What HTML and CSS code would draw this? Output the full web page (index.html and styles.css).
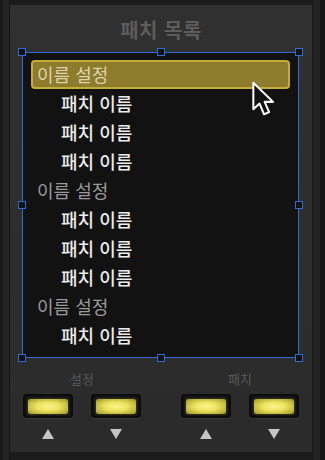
FILE: index.html
```html
<!DOCTYPE html>
<html lang="ko">
<head>
  <meta charset="UTF-8" />
  <title>패치 목록</title>
  <link rel="stylesheet" href="styles.css">
</head>
<body>
  <div class="frame">
    <div class="panel">
      <h1 class="title">패치 목록</h1>

      <div class="listbox">
        <!-- selection handles -->
        <span class="handle h-tl"></span>
        <span class="handle h-tm"></span>
        <span class="handle h-tr"></span>
        <span class="handle h-ml"></span>
        <span class="handle h-mr"></span>
        <span class="handle h-bl"></span>
        <span class="handle h-bm"></span>
        <span class="handle h-br"></span>

        <ul class="patch-list">
          <li class="group selected">이름 설정</li>
          <li class="item">패치 이름</li>
          <li class="item">패치 이름</li>
          <li class="item">패치 이름</li>
          <li class="group">이름 설정</li>
          <li class="item">패치 이름</li>
          <li class="item">패치 이름</li>
          <li class="item">패치 이름</li>
          <li class="group">이름 설정</li>
          <li class="item">패치 이름</li>
        </ul>

        <svg class="cursor" width="25" height="35" viewBox="0 0 21 31">
          <path d="M1.5 1.5 L1.5 25 L7 20 L11 29.5 L15.5 27.5 L11.5 18.5 L19 18.5 Z"
                fill="#111" stroke="#fff" stroke-width="1.8" stroke-linejoin="round"/>
        </svg>
      </div>

      <div class="controls">
        <div class="ctl-group">
          <div class="ctl-label">설정</div>
          <button class="led-btn"><span></span></button>
          <button class="led-btn"><span></span></button>
          <i class="arrow up"></i>
          <i class="arrow down"></i>
        </div>
        <div class="ctl-group">
          <div class="ctl-label">패치</div>
          <button class="led-btn"><span></span></button>
          <button class="led-btn"><span></span></button>
          <i class="arrow up"></i>
          <i class="arrow down"></i>
        </div>
      </div>
    </div>
  </div>
</body>
</html>
```

FILE: styles.css
```css
*, *::before, *::after { box-sizing: border-box; }
body {
  margin: 0;
  background: #1b1b1b;
  font-family: "Noto Sans CJK KR", "Noto Sans", sans-serif;
}
.frame {
  width: 325px;
  height: 460px;
  padding: 5px 13px 8px 10px;
  background:
    linear-gradient(90deg, #1a1a1a 0 3px, #242424 3px 9px, #151515 9px 10px, transparent 10px),
    linear-gradient(270deg, #161616 0 5px, #232323 5px 12px, #171717 12px 13px, transparent 13px),
    #1b1b1b;
}
.panel {
  height: 100%;
  background: linear-gradient(#303030, #2b2b2b);
  display: flex;
  flex-direction: column;
}
.title {
  margin: 0;
  height: 47px;
  line-height: 50px;
  text-align: center;
  font-size: 20px;
  font-weight: bold;
  color: #5c5c5c;
  letter-spacing: 0.5px;
}

/* list */
.listbox {
  position: relative;
  margin: 0 13px 0 12px;
  height: 306px;
  background: #121212;
  border: 1px solid #2f6bd0;
}
.patch-list {
  list-style: none;
  margin: 0;
  padding: 7px 8px 0 8px;
}
.patch-list li {
  height: 29px;
  line-height: 28px;
  font-size: 18px;
  white-space: nowrap;
}
.group {
  color: #9a9a9a;
  padding-left: 6px;
}
.item {
  color: #ececec;
  font-weight: 500;
  padding-left: 30px;
}
.group.selected {
  background: #8d7c2b;
  border: 2px solid #c4ae38;
  border-radius: 4px;
  color: #dcd4b0;
  line-height: 24px;
  padding-left: 4px;
}
.handle {
  position: absolute;
  width: 8px;
  height: 8px;
  background: #121212;
  border: 1.5px solid #2f6bd0;
  z-index: 2;
}
.h-tl { left: -5px; top: -5px; }
.h-tm { left: calc(50% - 4px); top: -5px; }
.h-tr { right: -5px; top: -5px; }
.h-ml { left: -5px; top: calc(50% - 4px); }
.h-mr { right: -5px; top: calc(50% - 4px); }
.h-bl { left: -5px; bottom: -5px; }
.h-bm { left: calc(50% - 4px); bottom: -5px; }
.h-br { right: -5px; bottom: -5px; }
.cursor {
  position: absolute;
  left: 228px;
  top: 28px;
}

/* bottom controls */
.controls {
  display: flex;
  gap: 40px;
  padding: 12px 0 0 13px;
}
.ctl-group {
  display: grid;
  grid-template-columns: 50px 50px;
  column-gap: 18px;
  justify-items: center;
}
.ctl-label {
  grid-column: 1 / 3;
  font-size: 13px;
  color: #585858;
  height: 24px;
  line-height: 18px;
}
.led-btn {
  width: 50px;
  height: 24px;
  padding: 0;
  background: #141414;
  border: 1px solid #0b0b0b;
  border-radius: 3px;
  box-shadow: 0 1px 0 #3a3a3a, inset 0 0 2px #000;
  display: flex;
  align-items: center;
  justify-content: center;
}
.led-btn span {
  width: 40px;
  height: 15px;
  border-radius: 2px;
  background: radial-gradient(ellipse at center, #fbf48c 0%, #ece45f 40%, #b8b03a 80%, #8a8428 100%);
  box-shadow: 0 0 3px rgba(220, 210, 80, 0.35);
}
.arrow {
  margin-top: 11px;
  width: 0;
  height: 0;
  border-left: 6px solid transparent;
  border-right: 6px solid transparent;
}
.arrow.up { border-bottom: 10px solid #c4c4c4; }
.arrow.down { border-top: 10px solid #c4c4c4; }
```
